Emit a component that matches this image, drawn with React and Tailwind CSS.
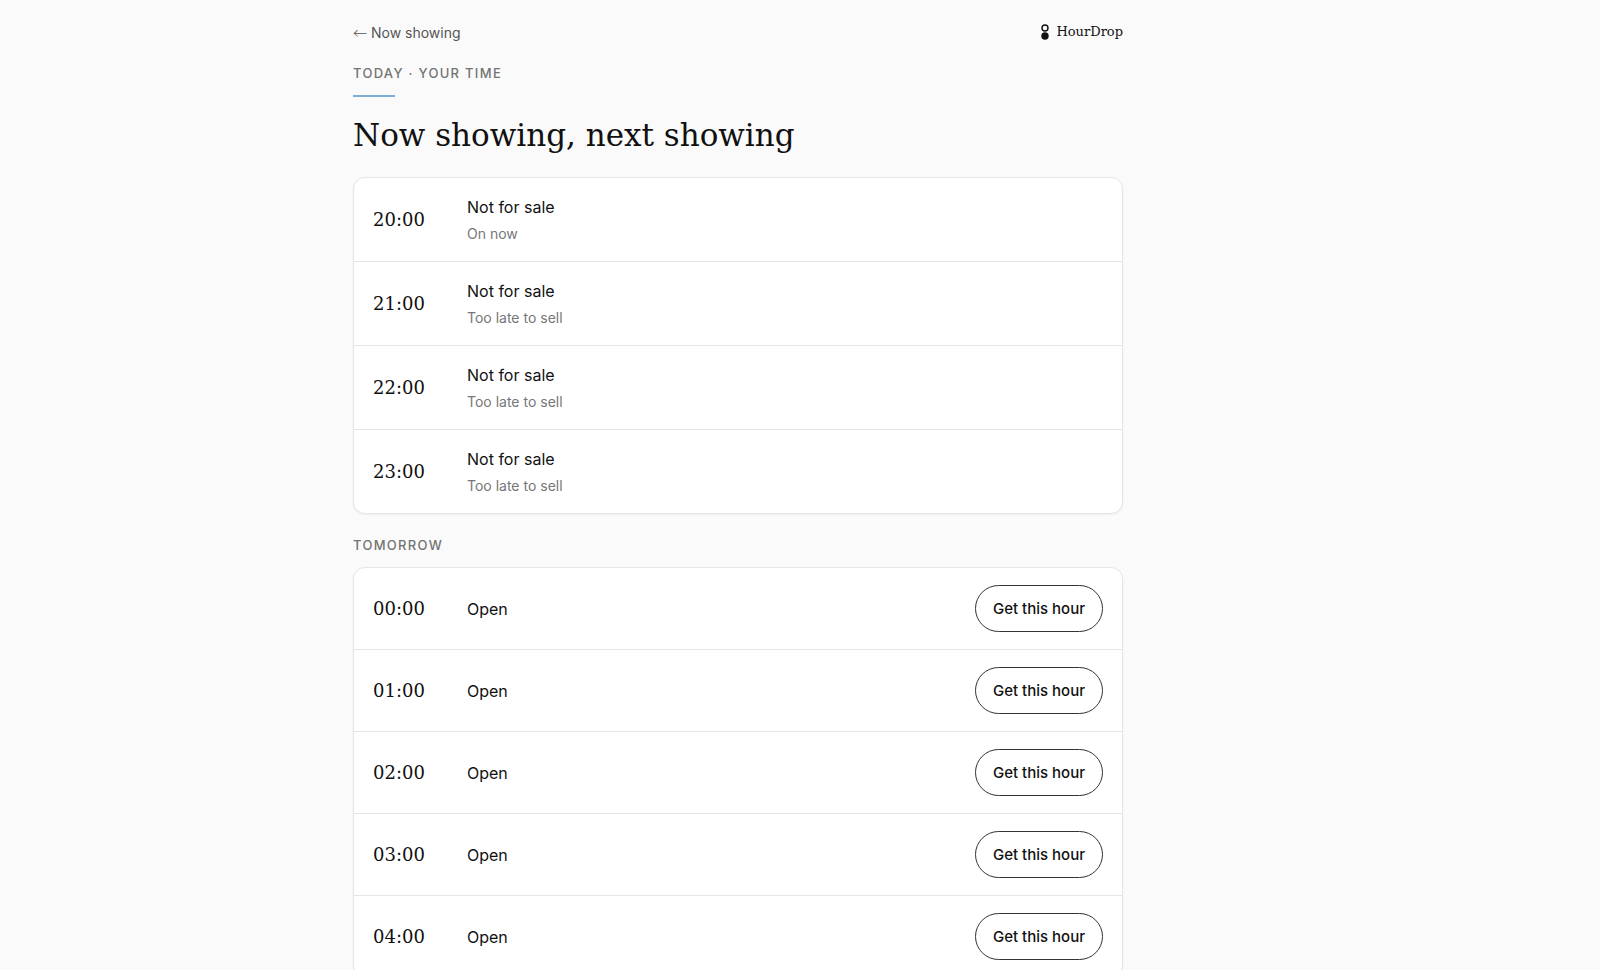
const today = [
  { time: "20:00", note: "On now" },
  { time: "21:00", note: "Too late to sell" },
  { time: "22:00", note: "Too late to sell" },
  { time: "23:00", note: "Too late to sell" },
];

const tomorrow = ["00:00", "01:00", "02:00", "03:00", "04:00"];

export default function App() {
  return (
    <div className="h-screen overflow-hidden bg-[#fafafa] font-['Inter',sans-serif] text-[#111111]">
      <div className="mx-auto max-w-[894px]">
        <main className="max-w-[770px] pt-5">
          <header className="flex h-6 items-center justify-between">
            <a href="#now" className="text-sm leading-6 text-[#555555]">
              <span className="font-['Noto_Sans_CJK_SC',sans-serif] font-light">←</span> Now showing
            </a>
            <a href="#home" className="flex items-center gap-[7px]">
              <Logo />
              <span className="font-['DejaVu_Serif',serif] text-[13px] leading-6">HourDrop</span>
            </a>
          </header>

          <p className="mt-[19px] text-[13px] leading-5 font-medium tracking-widest text-[#737373]">TODAY · YOUR TIME</p>
          <div className="mt-3 h-0.5 w-[42px] bg-[#7aaed6]" />
          <h1 className="mt-4 font-['DejaVu_Serif',serif] text-[31px] leading-[44px]">
            Now showing, next showing
          </h1>

          <Card className="mt-5">
            {today.map((slot) => (
              <Row key={slot.time} time={slot.time} title="Not for sale" note={slot.note} />
            ))}
          </Card>

          <h2 className="mt-[21px] text-[13px] leading-5 font-medium tracking-widest text-[#737373]">TOMORROW</h2>
          <Card className="mt-3">
            {tomorrow.map((time) => (
              <Row key={time} time={time} title="Open" forSale />
            ))}
          </Card>
        </main>
      </div>
    </div>
  );
}

function Card({ className, children }) {
  return (
    <ul className={`${className} divide-y divide-[#e5e5e5] rounded-xl border border-[#e5e5e5] bg-white shadow-xs`}>
      {children}
    </ul>
  );
}

function Row({ time, title, note, forSale }) {
  return (
    <li className="flex items-center px-[19px] py-[17px]">
      <time className="w-[94px] font-['DejaVu_Serif',serif] text-lg leading-6">{time}</time>
      <div className="flex-1">
        <div className="text-base leading-6">{title}</div>
        {note && <div className="mt-1 text-sm leading-[21px] text-[#777777]">{note}</div>}
      </div>
      {forSale && (
        <button className="rounded-full border border-[#333333] px-[17px] py-3 text-[15px] leading-[21px] font-medium">
          Get this hour
        </button>
      )}
    </li>
  );
}

function Logo() {
  return (
    <svg width="8" height="16" viewBox="0 0 8 16" aria-hidden="true">
      <circle cx="4" cy="4" r="3" fill="none" stroke="#111111" strokeWidth="1.4" />
      <circle cx="4" cy="12" r="3.7" fill="#111111" />
    </svg>
  );
}
